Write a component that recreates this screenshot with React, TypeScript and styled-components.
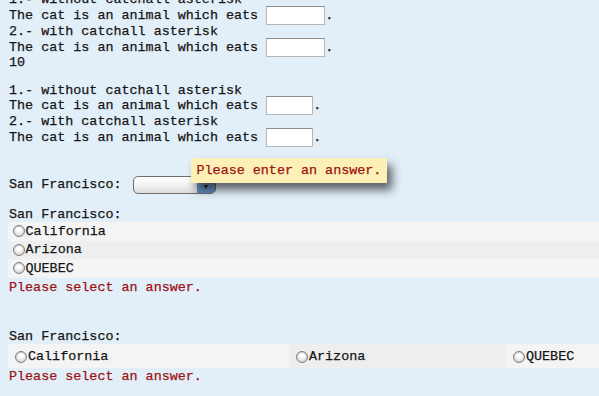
import styled, { createGlobalStyle } from "styled-components";

const GlobalStyle = createGlobalStyle`
  html, body {
    margin: 0;
    background: #e2eff9;
  }
  body {
    font-family: "Liberation Mono", "Courier New", monospace;
    font-size: 13.4px;
    color: #151515;
    -webkit-text-stroke: 0.25px #151515;
    overflow: hidden;
  }
`;

const Page = styled.div`
  padding: 0 0 0 8px;
  margin-top: -8px;
`;

const Line = styled.div<{ $h?: number; $gap?: number; $error?: boolean }>`
  display: flex;
  align-items: center;
  height: ${(p) => p.$h ?? 15.5}px;
  margin-top: ${(p) => p.$gap ?? 0}px;
  padding-left: 1px;
  white-space: pre;
  color: ${(p) => (p.$error ? "#9a1212" : "inherit")};
  -webkit-text-stroke-color: ${(p) => (p.$error ? "#9a1212" : "#151515")};
`;

const Blank = styled.input<{ $w: number }>`
  box-sizing: border-box;
  width: ${(p) => p.$w}px;
  height: 19px;
  margin: 0;
  padding: 0;
  border: 1px solid #b6b6b6;
  border-top-color: #8e8e8e;
  background: #fff;
`;

const SelectWrap = styled.div`
  position: relative;
  margin-left: 3px;
`;

const SelectBox = styled.div`
  box-sizing: border-box;
  display: flex;
  justify-content: flex-end;
  width: 83px;
  height: 18px;
  border: 1px solid #6f6f6f;
  border-radius: 5px;
  overflow: hidden;
  background: linear-gradient(#ffffff, #f2f2f2 50%, #dcdcdc);
`;

const SelectArrow = styled.div`
  display: flex;
  align-items: center;
  justify-content: center;
  width: 18px;
  height: 100%;
  background: linear-gradient(#b8d2ec, #7ea7d3 50%, #5f8fc6);

  &::after {
    content: "";
    margin-top: 4px;
    border-left: 2.5px solid transparent;
    border-right: 2.5px solid transparent;
    border-top: 4px solid #222;
  }
`;

const Tooltip = styled.div`
  position: absolute;
  left: 58px;
  top: -18px;
  box-sizing: border-box;
  width: 196px;
  height: 25px;
  padding-left: 6px;
  display: flex;
  align-items: center;
  background: #fdf0b6;
  color: #9a1212;
  -webkit-text-stroke-color: #9a1212;
  box-shadow: 5px 7px 10px rgba(0, 0, 0, 0.6);
  white-space: pre;
`;

const RadioRow = styled.div<{ $dark?: boolean }>`
  display: flex;
  align-items: center;
  height: 18.5px;
  padding-left: 4.5px;
  background: ${(p) => (p.$dark ? "#eeeeee" : "#f4f4f4")};
`;

const Radio = styled.span`
  box-sizing: border-box;
  flex: none;
  width: 12px;
  height: 12px;
  margin-right: 1px;
  border: 1px solid #7d7d7d;
  border-radius: 50%;
  background: radial-gradient(circle at 50% 30%, #ffffff 25%, #e4e4e4 60%, #c4c4c4);
  box-shadow: inset 0 1px 1px rgba(0, 0, 0, 0.2);
  -webkit-text-stroke: 0;
`;

const Choices = styled.div`
  display: grid;
  grid-template-columns: 281px 217px 1fr;
  height: 23.5px;
`;

const Choice = styled.div<{ $dark?: boolean }>`
  display: flex;
  align-items: center;
  padding-left: 7px;
  padding-top: 2px;
  background: ${(p) => (p.$dark ? "#eeeeee" : "#f4f4f4")};
`;

const states = ["California", "Arizona", "QUEBEC"];

const Question = ({ width }: { width: number }) => (
  <>
    <Line>1.- without catchall asterisk</Line>
    <Line $h={16}>
      The cat is an animal which eats <Blank $w={width} />.
    </Line>
    <Line>2.- with catchall asterisk</Line>
    <Line $h={16}>
      The cat is an animal which eats <Blank $w={width} />.
    </Line>
  </>
);

export default function App() {
  return (
    <>
      <GlobalStyle />
      <Page>
        <Question width={59} />
        <Line>10</Line>

        <Line $h={0} $gap={11.75} />
        <Question width={47} />

        <Line $h={21} $gap={28.75}>
          San Francisco:{" "}
          <SelectWrap>
            <SelectBox>
              <SelectArrow />
            </SelectBox>
            <Tooltip>Please enter an answer.</Tooltip>
          </SelectWrap>
        </Line>

        <Line $gap={11.5}>San Francisco:</Line>
        {states.map((s, i) => (
          <RadioRow key={s} $dark={i === 1}>
            <Radio />
            {s}
          </RadioRow>
        ))}
        <Line $gap={2} $error>
          Please select an answer.
        </Line>

        <Line $h={15} $gap={34}>
          San Francisco:
        </Line>
        <Choices>
          {states.map((s, i) => (
            <Choice key={s} $dark={i === 1}>
              <Radio />
              {s}
            </Choice>
          ))}
        </Choices>
        <Line $gap={1} $error>
          Please select an answer.
        </Line>
      </Page>
    </>
  );
}
